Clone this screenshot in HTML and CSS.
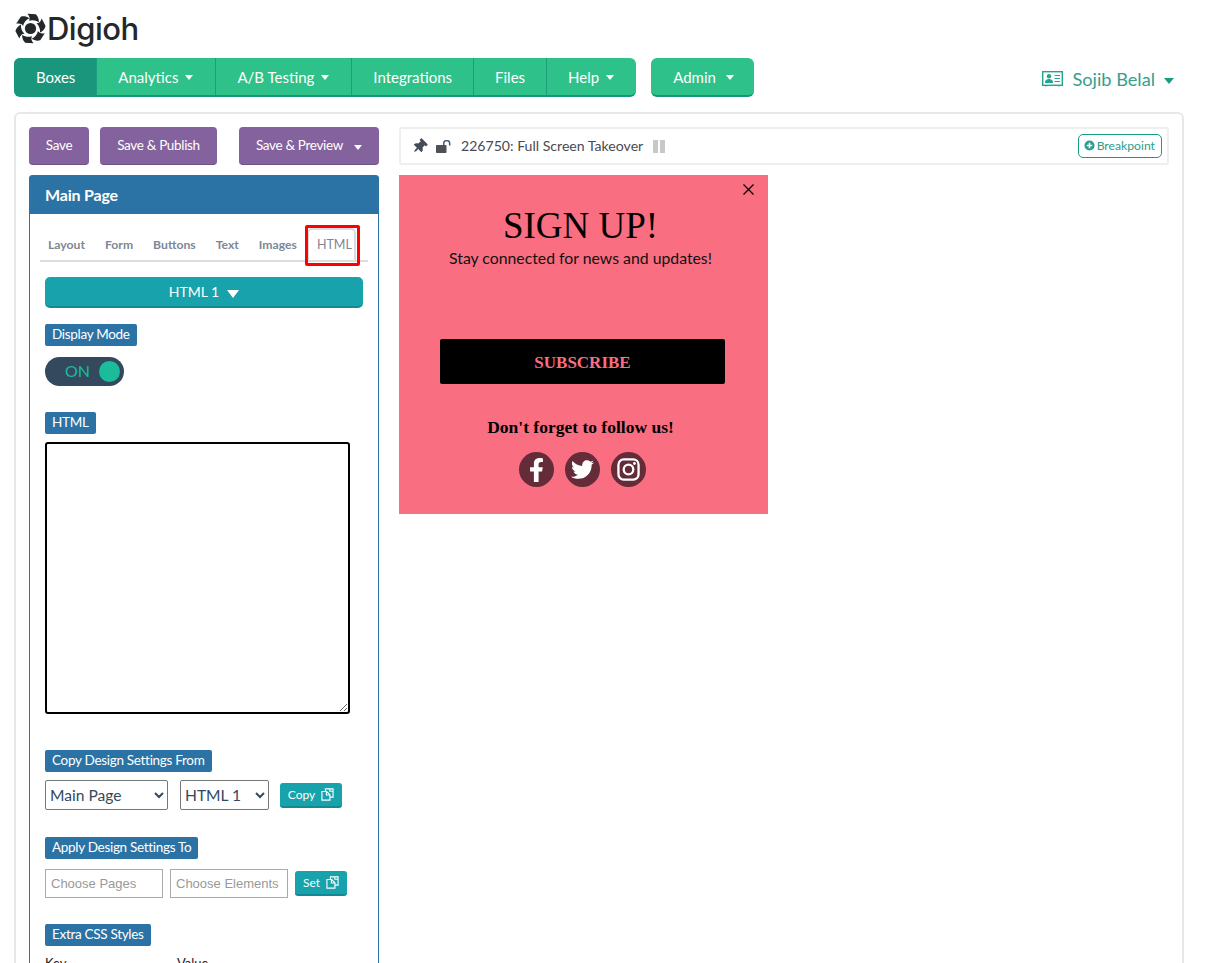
FILE: index.html
```html
<!DOCTYPE html>
<html lang="en">
<head>
<meta charset="utf-8">
<title>Digioh</title>
<link rel="stylesheet" href="styles.css">
</head>
<body>
<svg class="defs" width="0" height="0" aria-hidden="true">
  <symbol id="copy" viewBox="0 0 14 14"><path d="M4.800 3.800V1h4.700l3.500 0v8.800H9.600M4.800 3.800H1v9.300h8.600V7.200L6.200 3.800H4.800zM5.800 3.800v3.800h3.800M9.500 1v2.500h3.500" fill="none" stroke="currentColor" stroke-width="1.200"/></symbol>
</svg>
<header class="logo">
  <svg class="logo-mark" viewBox="0 0 32 32" aria-hidden="true">
    <circle cx="16" cy="16" r="5.800" fill="#23282b"/>
    <g fill="#23282b">
      <path id="blade" d="M12.800.8L21.500 1.200C23.800 3.500 24.800 6.400 24.600 9.600C21.800 7.600 18.200 6.800 14.400 8C15.800 5.800 15 3 12.800.8z"/>
      <use href="#blade" transform="rotate(60 16 16)"/>
      <use href="#blade" transform="rotate(120 16 16)"/>
      <use href="#blade" transform="rotate(180 16 16)"/>
      <use href="#blade" transform="rotate(240 16 16)"/>
      <use href="#blade" transform="rotate(300 16 16)"/>
    </g>
  </svg>
  <span class="logo-text">Digioh</span>
</header>

<nav class="topbar">
  <div class="navgroup">
    <a class="navitem active">Boxes</a>
    <a class="navitem">Analytics<i class="caret"></i></a>
    <a class="navitem">A/B Testing<i class="caret"></i></a>
    <a class="navitem">Integrations</a>
    <a class="navitem">Files</a>
    <a class="navitem">Help<i class="caret"></i></a>
  </div>
  <div class="navgroup admin">
    <a class="navitem">Admin<i class="caret admin-caret"></i></a>
  </div>
  <div class="user">
    <svg class="card-icon" viewBox="0 0 21 16" aria-hidden="true">
      <rect x=".7" y=".7" width="19.600" height="13.600" fill="none" stroke="currentColor" stroke-width="1.4"/>
      <circle cx="7" cy="5.300" r="2.200" fill="currentColor"/>
      <path d="M3 12c0-3 1.500-4 4-4s4 1 4 4z" fill="currentColor"/>
      <path d="M12.500 4.500h5.500M12.500 7.500h5.500M12.500 10.500h5.500" stroke="currentColor" stroke-width="1.200"/>
      <path d="M4 14.500v1.200M17 14.500v1.200" stroke="currentColor"/>
    </svg>
    <span class="user-name">Sojib Belal</span>
    <i class="user-caret"></i>
  </div>
</nav>

<main class="frame">
  <aside class="side">
    <div class="actions">
      <button class="pbtn save">Save</button>
      <button class="pbtn publish">Save &amp; Publish</button>
      <button class="pbtn preview">Save &amp; Preview<i class="caret preview-caret"></i></button>
    </div>
    <section class="panel">
      <h2 class="panel-head">Main Page</h2>
      <div class="panel-body">
        <div class="tabs">
          <span class="tab">Layout</span>
          <span class="tab">Form</span>
          <span class="tab">Buttons</span>
          <span class="tab">Text</span>
          <span class="tab">Images</span>
          <span class="tab current">HTML</span>
          <span class="tab-mark"></span>
        </div>
        <button class="picker">HTML 1<i class="picker-caret"></i></button>
        <div class="label l-display">Display Mode</div>
        <div class="toggle"><span class="toggle-text">ON</span><span class="knob"></span></div>
        <div class="label l-html">HTML</div>
        <textarea class="code" aria-label="HTML"></textarea>
        <div class="label l-copy">Copy Design Settings From</div>
        <div class="row row-copy">
          <select class="sel sel-page"><option>Main Page</option></select>
          <select class="sel sel-el"><option>HTML 1</option></select>
          <button class="tbtn copy">Copy<svg class="copy-icon"><use href="#copy"/></svg></button>
        </div>
        <div class="label l-apply">Apply Design Settings To</div>
        <div class="row row-apply">
          <input class="field" placeholder="Choose Pages">
          <input class="field" placeholder="Choose Elements">
          <button class="tbtn set">Set<svg class="copy-icon"><use href="#copy"/></svg></button>
        </div>
        <div class="label l-extra">Extra CSS Styles</div>
        <div class="row kv"><span class="key">Key</span><span>Value</span></div>
      </div>
    </section>
  </aside>

  <div class="stage">
    <div class="toolbar">
      <svg class="pin" viewBox="0 0 384 512" aria-hidden="true"><path d="M298.028 214.267L285.793 96H328c13.255 0 24-10.745 24-24V24c0-13.255-10.745-24-24-24H56C42.745 0 32 10.745 32 24v48c0 13.255 10.745 24 24 24h42.207L85.972 214.267C37.465 236.82 0 277.261 0 328c0 13.255 10.745 24 24 24h136v104.007c0 1.242.289 2.467.845 3.578l24 48c2.941 5.882 11.364 5.893 14.311 0l24-48a8.008 8.008 0 0 0 .845-3.578V352h136c13.255 0 24-10.745 24-24-.001-51.183-37.983-91.42-85.973-113.733z"/></svg>
      <svg class="lock" viewBox="0 0 16 13" aria-hidden="true"><rect x="0" y="5" width="10.500" height="8" rx="1" fill="currentColor"/><path d="M7.700 5V3.500a3 3 0 0 1 6 0V5.500" fill="none" stroke="#45586c" stroke-width="1.500"/></svg>
      <span class="box-title">226750: Full Screen Takeover</span>
      <span class="pause"><i></i><i></i></span>
      <button class="breakpoint"><svg class="plus" viewBox="0 0 12 12" aria-hidden="true"><circle cx="6" cy="6" r="5.500" fill="currentColor"/><path d="M6 3v6M3 6h6" stroke="#fff" stroke-width="1.800"/></svg>Breakpoint</button>
    </div>
    <section class="popup">
      <svg class="close" viewBox="0 0 11 11" aria-hidden="true"><path d="M.5.5l10 10M10.500.5l-10 10" stroke="#000" stroke-width="1.300"/></svg>
      <h1 class="signup">SIGN UP!</h1>
      <p class="stay">Stay connected for news and updates!</p>
      <div class="subscribe">SUBSCRIBE</div>
      <p class="follow">Don't forget to follow us!</p>
      <div class="socials">
        <span class="social"><svg class="fb" viewBox="0 0 320 512" aria-hidden="true"><path d="M279.14 288l14.22-92.66h-88.91v-60.13c0-25.35 12.42-50.06 52.24-50.06h40.42V6.26S260.43 0 225.36 0c-73.22 0-121.08 44.38-121.08 124.72v70.62H22.89V288h81.39v224h100.17V288z"/></svg></span>
        <span class="social"><svg class="tw" viewBox="0 0 512 512" aria-hidden="true"><path d="M459.37 151.716c.325 4.548.325 9.097.325 13.645 0 138.72-105.583 298.558-298.558 298.558-59.452 0-114.68-17.219-161.137-47.106 8.447.974 16.568 1.299 25.34 1.299 49.055 0 94.213-16.568 130.274-44.832-46.132-.975-84.792-31.188-98.112-72.772 6.498.974 12.995 1.624 19.818 1.624 9.421 0 18.843-1.3 27.614-3.573-48.081-9.747-84.143-51.98-84.143-102.985v-1.299c13.969 7.797 30.214 12.67 47.431 13.319-28.264-18.843-46.781-51.005-46.781-87.391 0-19.492 5.197-37.36 14.294-52.954 51.655 63.675 129.3 105.258 216.365 109.807-1.624-7.797-2.599-15.918-2.599-24.04 0-57.828 46.782-104.934 104.934-104.934 30.213 0 57.502 12.67 76.67 33.137 23.715-4.548 46.456-13.32 66.599-25.34-7.798 24.366-24.366 44.833-46.132 57.827 21.117-2.273 41.584-8.122 60.426-16.243-14.292 20.791-32.161 39.308-52.628 54.253z"/></svg></span>
        <span class="social"><svg class="ig" viewBox="0 0 24 24" aria-hidden="true"><rect x="1.500" y="1.500" width="21" height="21" rx="5.500" fill="none" stroke="#fff" stroke-width="2.400"/><circle cx="12" cy="12" r="5" fill="none" stroke="#fff" stroke-width="2.400"/><circle cx="18.200" cy="5.800" r="1.500" fill="#fff"/></svg></span>
      </div>
    </section>
  </div>
</main>
</body>
</html>
```

FILE: styles.css
```css
* { box-sizing: border-box; }
html { height: 100%; overflow: hidden; background: #fff; }
body {
  margin: 0;
  height: 963px;
  overflow: hidden;
  padding: 12px 23px 0 14px;
  font-family: Lato, "Liberation Sans", sans-serif;
  color: #34495e;
}
.defs { position: absolute; }

.logo { display: flex; align-items: center; height: 35px; padding-left: 1px; }
.logo-mark { width: 31px; height: 31px; flex: none; margin-top: -3px; margin-right: 1px; }
.logo-text {
  margin-top: -2px;
  font-family: Inter, sans-serif;
  font-weight: 500;
  font-size: 31px;
  line-height: 35px;
  letter-spacing: -.5px;
  color: #23282b;
}

.topbar { display: flex; margin-top: 11px; height: 39px; }
.navgroup {
  display: flex;
  background: #2ec189;
  border-bottom: 2px solid #18937c;
  border-radius: 6px;
  overflow: hidden;
}
.admin { margin-left: 15px; }
.navitem {
  display: flex;
  align-items: center;
  padding: 0 21px;
  font-size: 15px;
  color: #fff;
  border-left: 1px solid #1c9d80;
}
.navitem:first-child { border-left: 0; padding-left: 22px; }
.active { background: #19967c; }
.caret {
  display: inline-block;
  margin: 2px 1px 0 7px;
  border: 4px solid transparent;
  border-top: 5px solid #fff;
  border-bottom: 0;
}
.admin-caret { margin-left: 10px; margin-right: -1px; }
.preview-caret { margin-left: 11px; margin-right: 0; }

.user {
  display: flex;
  align-items: center;
  margin-left: auto;
  margin-right: 10px;
  padding-top: 3px;
  color: #24a48e;
}
.card-icon { width: 21px; height: 16px; }
.user-name { margin-left: 9px; font-size: 18.200px; color: #33a08e; }
.user-caret {
  margin-left: 9px;
  margin-top: 3px;
  border: 5px solid transparent;
  border-top: 6px solid #1a9c84;
  border-bottom: 0;
}

.frame {
  display: flex;
  height: 900px;
  margin-top: 15px;
  padding: 13px 13px 0 13px;
  border: 2px solid #e7e9e9;
  border-radius: 6px;
}
.side { width: 350px; flex: none; }
.actions { display: flex; height: 38px; }
.pbtn {
  padding: 0 0 2px;
  border: 0;
  border-bottom: 1px solid #6f528a;
  border-radius: 4px;
  background: #84629d;
  color: #fff;
  font: 13.500px Lato, sans-serif;
  letter-spacing: -.33px;
}
.save { width: 60px; }
.publish { width: 117px; margin-left: 11px; }
.preview { width: 140px; margin-left: 22px; }

.panel { margin-top: 10px; height: 800px; border: 1px solid #2c73a5; border-top: 0; border-radius: 4px 4px 0 0; }
.panel-head {
  margin: 0 -1px;
  height: 39px;
  padding: 0 0 0 16px;
  background: #2c73a5;
  border-radius: 4px 4px 0 0;
  color: #fff;
  font-size: 16px;
  font-weight: 700;
  line-height: 39px;
  letter-spacing: -.2px;
}
.panel-body { padding: 0 15px; }

.tabs {
  position: relative;
  display: flex;
  align-items: center;
  height: 48px;
  margin: 0 -5px;
  padding: 14px 0 0 8px;
  border-bottom: 2px solid #ddd;
  font-size: 12.200px;
  font-weight: 700;
  color: #7d8794;
}
.tab { margin-right: 20px; white-space: nowrap; }
.current {
  margin: 0 0 -1px -10px;
  padding: 0 2px 0 8px;
  height: 33px;
  line-height: 29px;
  align-self: flex-end;
  border: 2px solid #dcdcdf;
  border-bottom: 0;
  border-radius: 5px 5px 0 0;
  font-weight: 400;
  font-size: 12.500px;
}
.tab-mark {
  position: absolute;
  left: 265px;
  top: 11px;
  width: 55px;
  height: 41px;
  border: 3px solid #f00;
  border-radius: 2px;
}

.picker {
  display: block;
  width: 318px;
  height: 31px;
  margin-top: 15px;
  padding: 0;
  border: 0;
  border-bottom: 2px solid #138a92;
  border-radius: 5px;
  background: #17a2ac;
  color: #fff;
  font: 14px Lato, sans-serif;
}
.picker-caret {
  display: inline-block;
  margin-left: 8px;
  border: 6px solid transparent;
  border-top: 8px solid #fff;
  border-bottom: 0;
  vertical-align: -1px;
}

.label {
  width: max-content;
  height: 22px;
  padding: 0 7px;
  border-radius: 2px;
  background: #2c73a5;
  color: #fff;
  font-size: 13.500px;
  letter-spacing: -.3px;
  line-height: 21px;
}
.l-display { margin-top: 16px; }
.l-html { margin-top: 26px; }
.l-copy { margin-top: 36px; }
.l-apply { margin-top: 27px; }
.l-extra { margin-top: 26px; }

.toggle {
  display: flex;
  align-items: center;
  justify-content: flex-end;
  width: 79px;
  height: 29px;
  margin-top: 11px;
  padding-right: 4px;
  border-radius: 15px;
  background: #34495e;
}
.toggle-text { margin: 0 9px 2px 0; color: #1abc9c; font-size: 16px; }
.knob { width: 21px; height: 21px; border-radius: 50%; background: #1abc9c; }

.code {
  display: block;
  width: 305px;
  height: 272px;
  margin: 8px 0 0;
  border: 2px solid #000;
  border-radius: 3px;
  background: #fff;
}

.row { display: flex; align-items: center; }
.row-copy { margin-top: 8px; height: 30px; }
.row-apply { margin-top: 10px; height: 29px; }
.sel {
  height: 30px;
  background: #fff;
  border: 1px solid #767676;
  border-radius: 2px;
  color: #34495e;
  font: 15.600px Lato, sans-serif;
}
.sel-page { width: 123px; }
.sel-el { width: 89px; margin-left: 12px; }
.tbtn {
  display: flex;
  align-items: center;
  justify-content: center;
  height: 25px;
  padding: 0;
  border: 0;
  border-bottom: 2px solid #138a92;
  border-radius: 3px;
  background: #17a2ac;
  color: #fff;
  font: 12px Lato, sans-serif;
}
.copy { width: 62px; margin-left: 11px; }
.set { width: 52px; margin-left: 7px; }
.copy-icon { width: 13px; height: 13px; margin-left: 6px; }
.field {
  width: 118px;
  height: 29px;
  padding: 0 5px;
  border: 1px solid #aaa;
  border-radius: 0;
  font: 13px "Liberation Sans", Arial, sans-serif;
}
.field + .field { margin-left: 7px; }
.field::placeholder { color: #999; opacity: 1; }
.kv { margin-top: 9px; font-size: 13px; color: #222; }
.key { width: 132px; }

.stage { flex: 1; margin-left: 20px; min-width: 0; }
.toolbar {
  display: flex;
  align-items: center;
  height: 38px;
  padding: 0 5px 0 13px;
  border: 2px solid #eee;
  border-radius: 3px;
}
.pin { width: 11px; height: 15px; fill: #444c5a; transform: rotate(45deg); }
.lock { width: 16px; height: 13px; margin-left: 11px; color: #4d5156; }
.box-title { margin: 0 0 2px 9px; font-size: 14.100px; color: #4a4a4f; }
.pause { display: flex; gap: 2px; margin-left: 10px; }
.pause i { width: 5px; height: 13px; background: #c8c8ca; }
.breakpoint {
  display: flex;
  align-items: center;
  height: 24px;
  margin-left: auto;
  padding: 0 6px 1px 5px;
  border: 1px solid #1a9c84;
  border-radius: 5px;
  background: #fff;
  color: #2d9c8c;
  font: 12.200px Lato, sans-serif;
}
.plus { width: 11px; height: 11px; margin-right: 2px; }

.popup {
  position: relative;
  width: 369px;
  height: 339px;
  margin-top: 10px;
  background: #fa6e82;
  color: #000;
  font-family: "Liberation Serif", serif;
}
.close { position: absolute; right: 14px; top: 9px; width: 11px; height: 11px; }
.signup {
  margin: 0;
  padding: 29px 6px 0 0;
  font-size: 37px;
  font-weight: 400;
  line-height: 44px;
  text-align: center;
}
.stay {
  margin: 0;
  padding-right: 6px;
  font: 15.800px/20px Lato, sans-serif;
  text-align: center;
  color: #111;
}
.subscribe {
  width: 285px;
  height: 45px;
  margin: 71px 0 0 41px;
  border-radius: 2px;
  background: #000;
  color: #fa6e82;
  font-size: 17px;
  font-weight: 700;
  line-height: 47px;
  text-align: center;
}
.follow {
  margin: 32px 0 0;
  padding-right: 6px;
  font-size: 17.500px;
  font-weight: 700;
  line-height: 22px;
  text-align: center;
}
.socials { display: flex; justify-content: center; gap: 11px; margin-top: 14px; padding-right: 2px; }
.social {
  display: flex;
  align-items: center;
  justify-content: center;
  width: 35px;
  height: 35px;
  border-radius: 50%;
  background: #632c38;
  fill: #fff;
}
.fb { width: 15px; height: 24px; }
.tw { width: 23px; height: 23px; }
.ig { width: 23px; height: 23px; }
```
